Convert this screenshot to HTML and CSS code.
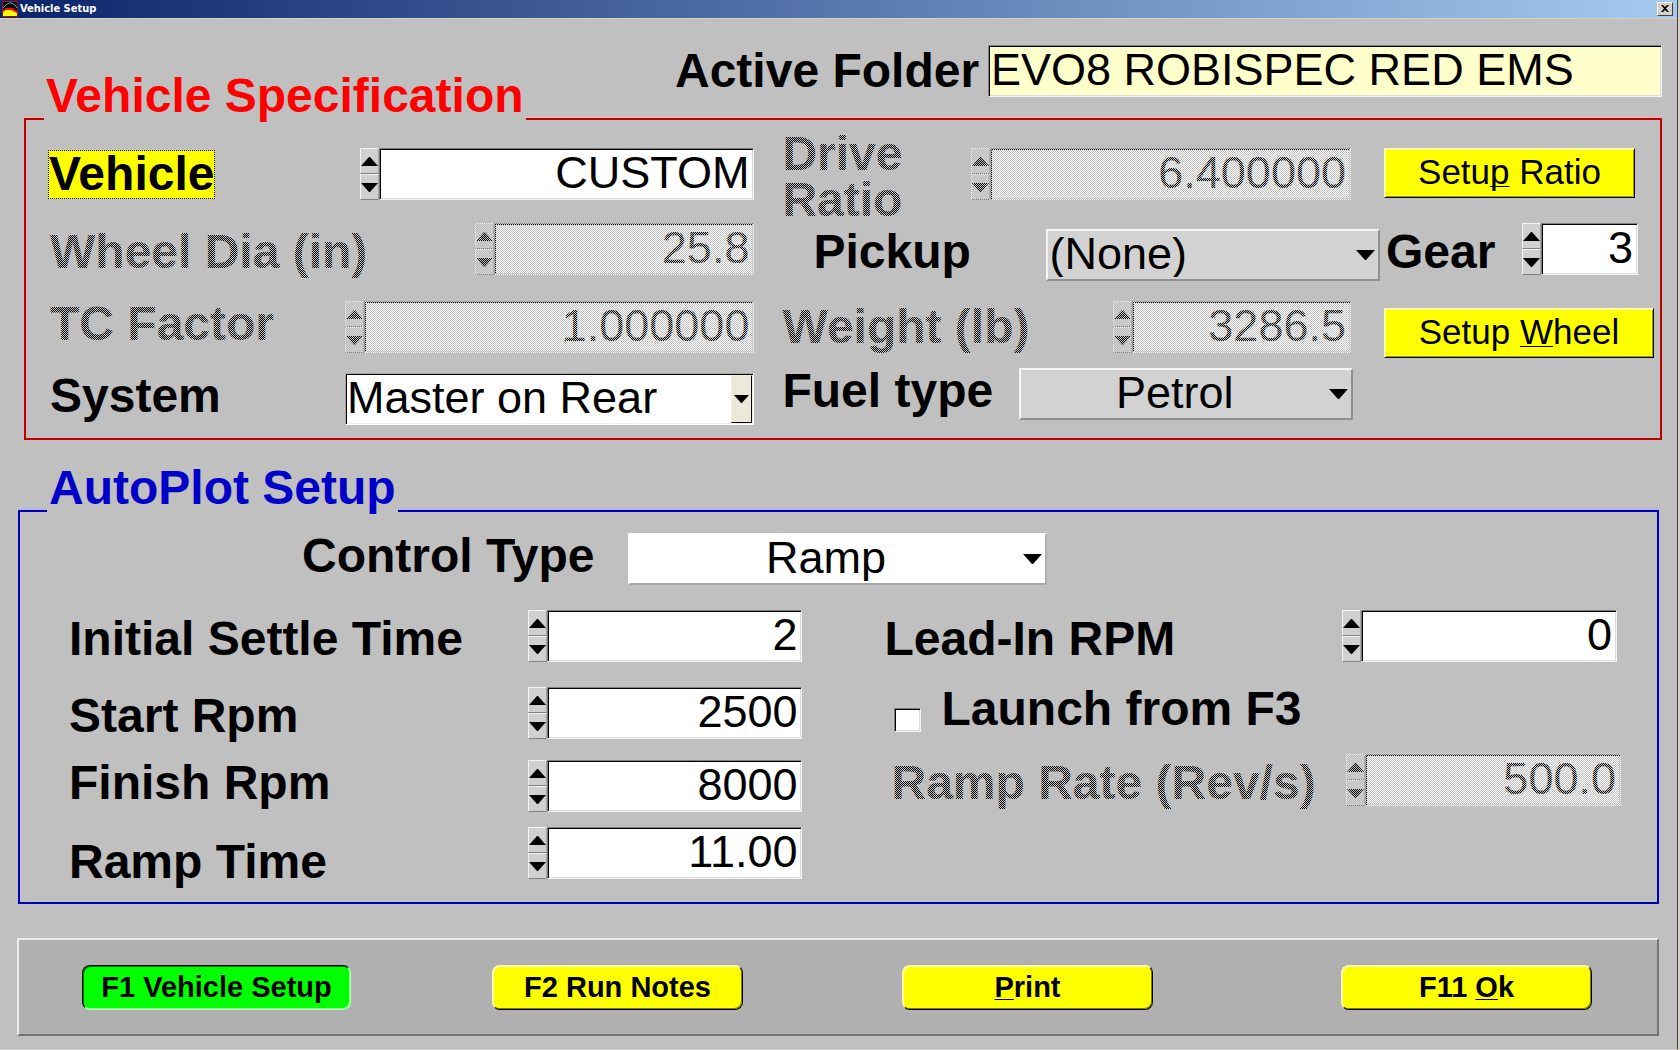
FILE: index.html
```html
<!DOCTYPE html>
<html lang="en">
<head>
<meta charset="utf-8">
<title>Vehicle Setup</title>
<link rel="stylesheet" href="styles.css">
</head>
<body>
<svg width="0" height="0" class="defs" aria-hidden="true">
  <symbol id="up" viewBox="0 0 17 9"><path d="M8 0h1l8 9H0z"/></symbol>
  <symbol id="down" viewBox="0 0 17 9"><path d="M0 0h17L9 9H8z"/></symbol>
</svg>
<main class="window">
  <header class="titlebar">
    <svg class="app-icon" viewBox="0 0 16 16" aria-hidden="true">
      <rect width="16" height="16" fill="#a01020"/>
      <rect x="1" y="1" width="14" height="14" fill="#000"/>
      <path d="M1 9l3-2h7l4 3v5H1z" fill="#e81010"/>
      <path d="M1 11l3-2h5l6 3v3H1z" fill="#ff0"/>
      <path d="M1 7l3-3 3-2h3l3 2 2 3" fill="none" stroke="#30c0c8"/>
    </svg>
    <h1>Vehicle Setup</h1>
    <button class="close" type="button" aria-label="Close"><svg width="8" height="7" viewBox="0 0 8 7"><path d="M0 0h2l2 2 2-2h2L5 3.500 8 7H6L4 5 2 7H0l3-3.500z"/></svg></button>
  </header>

  <form class="content">
    <div class="folder">
      <label for="folder">Active Folder</label>
      <input id="folder" class="field" type="text" value="EVO8 ROBISPEC RED EMS">
    </div>

    <section class="group vehicle">
      <div class="group-head"><h2>Vehicle Specification</h2></div>
      <div class="group-body">
        <div class="col">
          <div class="row r-vehicle">
            <label for="vehicle"><span class="focus">Vehicle</span></label>
            <div class="spin"><div class="steps"><button type="button" aria-label="Previous vehicle"><svg><use href="#up"/></svg></button><button type="button" aria-label="Next vehicle"><svg><use href="#down"/></svg></button></div><input id="vehicle" class="field" type="text" value="CUSTOM"></div>
          </div>
          <div class="row low off r-wheel">
            <label for="wheel">Wheel Dia (in)</label>
            <div class="spin"><div class="steps"><button type="button" disabled aria-label="Increase wheel diameter"><svg><use href="#up"/></svg></button><button type="button" disabled aria-label="Decrease wheel diameter"><svg><use href="#down"/></svg></button></div><input id="wheel" class="field" type="text" value="25.8" disabled></div>
          </div>
          <div class="row high off r-tc">
            <label for="tc">TC Factor</label>
            <div class="spin"><div class="steps"><button type="button" disabled aria-label="Increase TC factor"><svg><use href="#up"/></svg></button><button type="button" disabled aria-label="Decrease TC factor"><svg><use href="#down"/></svg></button></div><input id="tc" class="field" type="text" value="1.000000" disabled></div>
          </div>
          <div class="row high r-system">
            <label for="system">System</label>
            <div class="select combo"><select id="system"><option>Master on Rear</option></select><span class="drop"><svg><use href="#down"/></svg></span></div>
          </div>
        </div>
        <div class="col">
          <div class="row r-drive">
            <div class="pair off">
              <label for="drive">Drive Ratio</label>
              <div class="spin"><div class="steps"><button type="button" disabled aria-label="Increase drive ratio"><svg><use href="#up"/></svg></button><button type="button" disabled aria-label="Decrease drive ratio"><svg><use href="#down"/></svg></button></div><input id="drive" class="field" type="text" value="6.400000" disabled></div>
            </div>
            <div class="side"><button class="action ratio" type="button">Setu<u>p</u> Ratio</button></div>
          </div>
          <div class="row r-pickup">
            <label for="pickup">Pickup</label>
            <div class="select"><select id="pickup"><option>(None)</option></select><svg><use href="#down"/></svg></div>
            <label for="gear" class="gear">Gear</label>
            <div class="spin gear-spin"><div class="steps"><button type="button" aria-label="Next gear"><svg><use href="#up"/></svg></button><button type="button" aria-label="Previous gear"><svg><use href="#down"/></svg></button></div><input id="gear" class="field" type="text" value="3"></div>
          </div>
          <div class="row r-weight">
            <div class="pair off">
              <label for="weight">Weight (lb)</label>
              <div class="spin"><div class="steps"><button type="button" disabled aria-label="Increase weight"><svg><use href="#up"/></svg></button><button type="button" disabled aria-label="Decrease weight"><svg><use href="#down"/></svg></button></div><input id="weight" class="field" type="text" value="3286.5" disabled></div>
            </div>
            <div class="side"><button class="action" type="button">Setup <u>W</u>heel</button></div>
          </div>
          <div class="row high r-fuel">
            <label for="fuel">Fuel type</label>
            <div class="select centered"><select id="fuel"><option>Petrol</option></select><svg><use href="#down"/></svg></div>
          </div>
        </div>
      </div>
    </section>

    <section class="group autoplot">
      <div class="group-head"><h2>AutoPlot Setup</h2></div>
      <div class="group-body">
        <div class="row high r-control">
          <label for="control">Control Type</label>
          <div class="select centered white"><select id="control"><option>Ramp</option></select><svg><use href="#down"/></svg></div>
        </div>
        <div class="col">
          <div class="row low">
            <label for="settle">Initial Settle Time</label>
            <div class="spin"><div class="steps"><button type="button" aria-label="Increase settle time"><svg><use href="#up"/></svg></button><button type="button" aria-label="Decrease settle time"><svg><use href="#down"/></svg></button></div><input id="settle" class="field" type="text" value="2"></div>
          </div>
          <div class="row low r-start">
            <label for="start">Start Rpm</label>
            <div class="spin"><div class="steps"><button type="button" aria-label="Increase start rpm"><svg><use href="#up"/></svg></button><button type="button" aria-label="Decrease start rpm"><svg><use href="#down"/></svg></button></div><input id="start" class="field" type="text" value="2500"></div>
          </div>
          <div class="row high r-finish">
            <label for="finish">Finish Rpm</label>
            <div class="spin"><div class="steps"><button type="button" aria-label="Increase finish rpm"><svg><use href="#up"/></svg></button><button type="button" aria-label="Decrease finish rpm"><svg><use href="#down"/></svg></button></div><input id="finish" class="field" type="text" value="8000"></div>
          </div>
          <div class="row low r-time">
            <label for="time">Ramp Time</label>
            <div class="spin"><div class="steps"><button type="button" aria-label="Increase ramp time"><svg><use href="#up"/></svg></button><button type="button" aria-label="Decrease ramp time"><svg><use href="#down"/></svg></button></div><input id="time" class="field" type="text" value="11.00"></div>
          </div>
        </div>
        <div class="col">
          <div class="row low r-lead">
            <label for="lead">Lead-In RPM</label>
            <div class="spin"><div class="steps"><button type="button" aria-label="Increase lead-in rpm"><svg><use href="#up"/></svg></button><button type="button" aria-label="Decrease lead-in rpm"><svg><use href="#down"/></svg></button></div><input id="lead" class="field" type="text" value="0"></div>
          </div>
          <div class="row r-launch">
            <input id="launch" type="checkbox">
            <label for="launch">Launch from F3</label>
          </div>
          <div class="row low off r-rate">
            <label for="rate">Ramp Rate (Rev/s)</label>
            <div class="spin"><div class="steps"><button type="button" disabled aria-label="Increase ramp rate"><svg><use href="#up"/></svg></button><button type="button" disabled aria-label="Decrease ramp rate"><svg><use href="#down"/></svg></button></div><input id="rate" class="field" type="text" value="500.0" disabled></div>
          </div>
        </div>
      </div>
    </section>

    <footer class="keys">
      <button type="button" class="current">F1 Vehicle Setup</button>
      <button type="button">F2 Run Notes</button>
      <button type="button" class="print"><u>P</u>rint</button>
      <button type="button" class="ok">F11 <u>O</u>k</button>
    </footer>
  </form>
</main>
</body>
</html>
```
FILE: styles.css
```css
* { box-sizing: border-box; }

body {
  margin: 0;
  background: #fff;
  border-right: 2px solid #d4d0c8;
  color: #000;
  font: 45px/46px "Liberation Sans", Arial, sans-serif;
}

button, input, select { font: inherit; color: inherit; margin: 0; border-radius: 0; }
button { padding: 0; }
svg { display: block; }
.defs { position: absolute; }

.window {
  display: flex;
  flex-direction: column;
  min-height: calc(100vh - 1px);
  background: #c0c0c0;
  border-right: 1px solid #404040;
  border-bottom: 1px solid #d4d0c8;
}

/* Title bar */
.titlebar {
  display: flex;
  align-items: center;
  gap: 2px;
  height: 19px;
  padding: 0 4px 1px 2px;
  background: linear-gradient(90deg, #0a246a, #a6caf0);
  border-bottom: 1px solid #d4d0c8;
}
.app-icon { width: 16px; height: 16px; }
.titlebar h1 {
  margin: 0;
  color: #fff;
  font: bold 11px/16px "DejaVu Sans Condensed", "DejaVu Sans", sans-serif;
}
.close {
  display: grid;
  place-items: center;
  width: 16px;
  height: 14px;
  margin-left: auto;
  background: #d4d0c8;
  border: 1px solid;
  border-color: #fff #404040 #404040 #fff;
}

.content { flex: 1; padding: 26px 15px 0 17px; }

label { font-weight: bold; font-size: 48px; white-space: nowrap; }

/* Sunken fields */
.field {
  width: 100%;
  min-width: 0;
  height: 52px;
  padding: 0 4px 2px 2px;
  background: #fff;
  border: 1px solid;
  border-color: #808080 #f4f4f4 #f4f4f4 #808080;
  box-shadow: inset 1px 1px #000, inset -1px -1px #dcdcdc;
}
.spin { display: flex; flex: 1; min-width: 0; height: 52px; }
.spin .field { flex: 1; text-align: right; }
.steps { flex: none; display: grid; width: 19px; }
.steps button {
  display: grid;
  place-items: center;
  background: #d0d0d0;
  border: 1px solid;
  border-color: #f4f4f4 #a0a0a0 #808080 #f4f4f4;
}
.steps svg { width: 17px; height: 9px; }

/* Unavailable controls are stippled with the panel colour */
.off { position: relative; }
.off::after {
  content: "";
  position: absolute;
  inset: 0 0 -6px;
  background: repeating-conic-gradient(#c0c0c0 0 25%, transparent 0 50%) 0 0 / 2px 2px;
  pointer-events: none;
}

/* Drop-downs */
.select { display: grid; flex: 1; min-width: 0; height: 52px; }
.select > * { grid-area: 1 / 1; }
.select select {
  appearance: none;
  width: 100%;
  height: 52px;
  padding: 0 24px 2px 1px;
  background: #d2d2d2;
  border: 2px solid;
  border-color: #f4f4f4 #909090 #909090 #f4f4f4;
}
.select > svg {
  width: 23px;
  height: 10px;
  margin-right: 3px;
  place-self: center end;
  pointer-events: none;
}
.centered select { text-align-last: center; }
.white select { background: #fff; border-color: #fff #b0b0b0 #a8a8a8 #fff; }
.combo select {
  background: #fff;
  border: 1px solid;
  border-color: #aca899 #fff #fff #aca899;
  box-shadow: inset 1px 1px #000, inset -1px -1px #f1efe2;
}
.drop {
  display: grid;
  place-items: center;
  place-self: center end;
  width: 21px;
  height: 48px;
  margin-right: 2px;
  background: #ece9d8;
  border: 1px solid;
  border-color: #f1efe2 #000 #000 #f1efe2;
  pointer-events: none;
}
.drop svg { width: 15px; height: 8px; }

/* Rows */
.row { display: flex; align-items: center; }
.row > label { flex: none; }
.row.low > label { align-self: flex-end; }
.row.high > label { align-self: flex-start; }

.folder { display: flex; align-items: center; padding-left: 40%; }
.folder label { flex: 0 0 313px; }
.folder .field { flex: 1; background: #ffffcc; }

/* Framed groups */
.group-head { display: flex; align-items: flex-end; }
.group-head::before, .group-head::after {
  content: "";
  height: 3px;
  background: linear-gradient(var(--pale) 1px, var(--line) 1px);
}
.group-head::before { width: 20px; }
.group-head::after { flex: 1; }
.group-head h2 { margin: 0 2px; font-size: 48px; line-height: 48px; color: var(--title); }
.group-body { border: solid var(--line); border-width: 0 2px 2px; }

.vehicle {
  --title: #f00;
  --line: #c00000;
  --pale: #ffb0b0;
  margin: -25px 0 0 7px;
}
.vehicle .group-body {
  display: grid;
  grid-template-columns: 706fr 871fr;
  gap: 28px;
  padding: 11px 6px 13px 22px;
}
.vehicle .col:first-child { padding-top: 17px; }
.vehicle .col:first-child label { padding-left: 2px; }
.vehicle .col:first-child .r-vehicle label { padding-left: 0; }
.focus { display: inline-block; height: 49px; background: #ff0; border: 1px dotted #000; }
.r-vehicle > label { width: 312px; }
.r-wheel { margin-top: 23px; }
.r-wheel > label { width: 427px; }
.r-tc { margin-top: 26px; }
.r-tc > label, .r-system > label { width: 297px; }
.r-system { margin-top: 20px; }

.pair { display: flex; flex: 1; min-width: 0; }
.pair label { flex: none; }
.side { flex: none; width: 270px; margin-left: 33px; }
.r-drive { align-items: flex-start; }
.r-drive label { width: 189px; padding-right: 40px; white-space: normal; }
.r-drive .spin, .r-drive .side { margin-top: 17px; }
.r-pickup > label { width: 264px; padding-left: 31px; }
.r-pickup { align-items: flex-end; height: 58px; padding-right: 16px; }
.r-pickup > label { align-self: center; }
.r-pickup > label.gear { width: 142px; padding-left: 6px; }
.gear-spin { flex: 0 0 116px; align-self: flex-start; }
.r-weight { align-items: flex-start; margin-top: 20px; }
.r-weight .pair { align-items: center; }
.r-weight label { width: 331px; }
.r-weight .side { margin-top: 7px; }
.r-fuel { margin-top: 10px; padding-right: 301px; }
.r-fuel > label { width: 237px; }

.action {
  display: block;
  width: 100%;
  height: 50px;
  padding-bottom: 2px;
  font-size: 35px;
  line-height: 46px;
  background: #ff0;
  border: 1px solid;
  border-color: #ffffb0 #000 #000 #ffffb0;
  box-shadow: inset 1px 1px #ffff90, inset -1px -1px #a0a000;
}
.action.ratio { width: 251px; }
u { text-decoration-thickness: 1px; text-underline-offset: 2px; text-decoration-skip-ink: none; }

.autoplot {
  --title: #0000c8;
  --line: #0000b4;
  --pale: #b0b0ff;
  margin: 24px 3px 0 1px;
}
.autoplot .group-head::before { width: 29px; }
.autoplot .group-body {
  display: grid;
  grid-template-columns: 733fr 736fr;
  column-gap: 82px;
  padding: 21px 36px 17px 49px;
}
.r-control { grid-column: 1 / -1; padding: 0 574px 0 233px; margin-bottom: 25px; }
.r-control > label { width: 326px; }
.autoplot .col:nth-child(2) label { width: 459px; }
.r-start { margin-top: 25px; }
.r-finish { margin-top: 21px; }
.r-time { margin-top: 15px; min-height: 58px; }
.r-time .spin { align-self: flex-start; }
.r-lead { padding-right: 4px; }
.r-lead > label { width: 458px; }
.r-launch { margin-top: 24px; padding-left: 10px; gap: 20px; align-items: flex-end; }
.r-launch input {
  appearance: none;
  width: 27px;
  height: 24px;
  background: #fff;
  border: 1px solid;
  border-color: #808080 #f4f4f4 #f4f4f4 #808080;
  box-shadow: inset 1px 1px #000, inset -1px -1px #dcdcdc;
}
.r-rate { margin-top: 22px; padding-left: 7px; }
.r-rate > label { width: 455px; }

/* Function keys */
.keys {
  display: flex;
  align-items: center;
  gap: 141px;
  height: 98px;
  margin: 34px 3px 13px 0;
  padding: 0 65px 0 63px;
  background: #b0b0b0;
  border: 2px solid;
  border-color: #ececec #747474 #747474 #ececec;
}
.keys button {
  width: 251px;
  height: 45px;
  font-size: 29px;
  font-weight: bold;
  line-height: 40px;
  background: #ff0;
  border: 1px solid;
  border-color: #ffffb0 #000 #000 #ffffb0;
  border-radius: 8px;
  box-shadow: inset 1px 1px #ffffb0, inset -1px -1px #808000;
}
.keys .current {
  width: 269px;
  background: #0f0;
  border-color: #000 #c0ffc0 #c0ffc0 #000;
  box-shadow: inset 1px 1px #008000, inset -1px -1px #80ff80;
}
.keys .print { margin-left: 18px; }
.keys .ok { margin-left: auto; }
```
